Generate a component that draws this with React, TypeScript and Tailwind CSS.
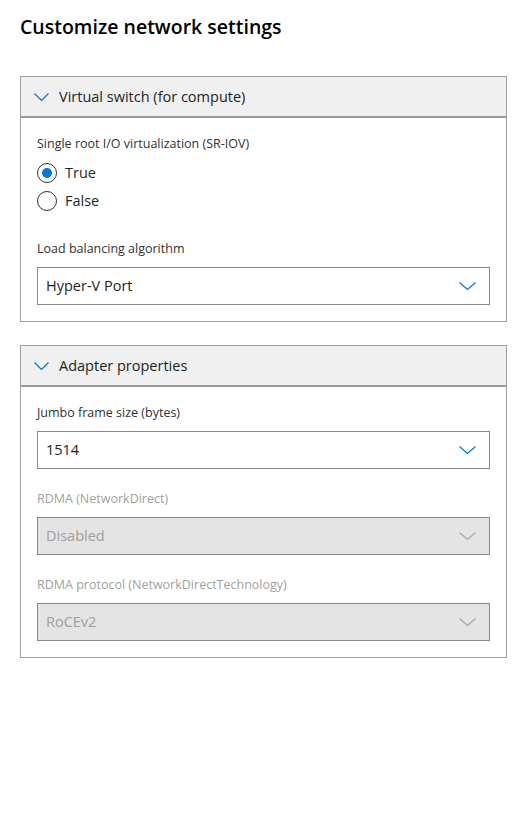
import React from "react";

function Chevron({ w = 16, h = 8, color = "#0078d4" }: { w?: number; h?: number; color?: string }) {
  return (
    <svg width={w} height={h} viewBox={`0 0 ${w} ${h}`} fill="none">
      <polyline points={`0.5,0.5 ${w / 2},${h - 0.5} ${w - 0.5},0.5`} stroke={color} strokeWidth="1.2" />
    </svg>
  );
}

function Section({ title, children }: { title: string; children: React.ReactNode }) {
  return (
    <div className="border border-[#a0a0a0]">
      <div className="h-[41px] bg-[#f0f0f0] border-b-2 border-[#9a9a9a] flex items-center pl-[13px] gap-[10px]">
        <Chevron w={15} h={8} />
        <span className="text-[14.5px] text-[#201f1e] font-medium">{title}</span>
      </div>
      <div className="px-4 pt-4 pb-4">{children}</div>
    </div>
  );
}

function Label({ text, disabled }: { text: string; disabled?: boolean }) {
  return (
    <div className={`h-5 leading-5 text-[12.5px] mb-2 ${disabled ? "text-[#a19f9d]" : "text-[#323130]"}`}>{text}</div>
  );
}

function Select({ value, disabled }: { value: string; disabled?: boolean }) {
  return (
    <div
      className={`h-[38px] border border-[#8a8886] flex items-center justify-between pl-[8px] pr-[13px] ${
        disabled ? "bg-[#e4e4e4]" : "bg-white"
      }`}
    >
      <span className={`text-[14.5px] ${disabled ? "text-[#a19f9d]" : "text-[#201f1e]"}`}>{value}</span>
      <Chevron w={17} h={8} color={disabled ? "#a6a6a6" : "#0078d4"} />
    </div>
  );
}

function Radio({ label, checked }: { label: string; checked?: boolean }) {
  return (
    <div className="h-7 flex items-center gap-[8px]">
      <div className="w-5 h-5 rounded-full border border-[#323130] flex items-center justify-center">
        {checked && <div className="w-[10px] h-[10px] rounded-full bg-[#0078d4]" />}
      </div>
      <span className="text-[14.5px] text-[#201f1e]">{label}</span>
    </div>
  );
}

export default function App() {
  return (
    <div
      className="w-[525px] h-[840px] bg-white px-5 pt-[14px]"
      style={{ fontFamily: '"Segoe UI", "Open Sans", "Noto Sans", sans-serif' }}
    >
      <h1 className="text-[19.5px] font-semibold text-black leading-[26px]">Customize network settings</h1>

      <div className="mt-[36px] flex flex-col gap-[23px] w-[487px]">
        <Section title="Virtual switch (for compute)">
          <Label text="Single root I/O virtualization (SR-IOV)" />
          <div className="-mt-[3px]">
            <Radio label="True" checked />
            <Radio label="False" />
          </div>
          <div className="mt-6">
            <Label text="Load balancing algorithm" />
            <Select value="Hyper-V Port" />
          </div>
        </Section>

        <Section title="Adapter properties">
          <div className="flex flex-col gap-5">
            <div>
              <Label text="Jumbo frame size (bytes)" />
              <Select value="1514" />
            </div>
            <div>
              <Label text="RDMA (NetworkDirect)" disabled />
              <Select value="Disabled" disabled />
            </div>
            <div>
              <Label text="RDMA protocol (NetworkDirectTechnology)" disabled />
              <Select value="RoCEv2" disabled />
            </div>
          </div>
        </Section>
      </div>
    </div>
  );
}
